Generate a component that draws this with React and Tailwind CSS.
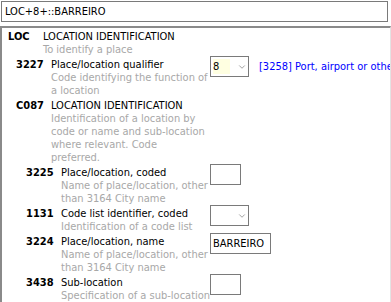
import { ChevronDown } from "lucide-react";

const entries = [
  { code: "LOC", level: 0, title: "LOCATION IDENTIFICATION", desc: ["To identify a place"] },
  {
    code: "3227",
    level: 1,
    title: "Place/location qualifier",
    desc: ["Code identifying the function of", "a location"],
    control: "select",
    value: "8",
    note: "[3258] Port, airport or other",
  },
  {
    code: "C087",
    level: 1,
    title: "LOCATION IDENTIFICATION",
    desc: [
      "Identification of a location by",
      "code or name and sub-location",
      "where relevant. Code",
      "preferred.",
    ],
  },
  {
    code: "3225",
    level: 2,
    title: "Place/location, coded",
    desc: ["Name of place/location, other", "than 3164 City name"],
    control: "input",
    width: "w-[31px]",
  },
  {
    code: "1131",
    level: 2,
    title: "Code list identifier, coded",
    desc: ["Identification of a code list"],
    control: "select",
  },
  {
    code: "3224",
    level: 2,
    title: "Place/location, name",
    desc: ["Name of place/location, other", "than 3164 City name"],
    control: "input",
    value: "BARREIRO",
    width: "w-[61px]",
  },
  {
    code: "3438",
    level: 2,
    title: "Sub-location",
    desc: ["Specification of a sub-location"],
    control: "input",
    width: "w-[31px]",
  },
];

// indent per nesting level, and what is left for the text before the control column
const indent = ["pl-[6px]", "pl-[14px]", "pl-[24px]"];
const textWidth = ["w-[167px]", "w-[159px]", "w-[149px]"];

function Control({ entry }) {
  if (entry.control === "select") {
    return (
      <div className="flex items-center">
        <div className="w-[39px] h-[21px] border border-[#7a7a7a] bg-white flex items-center pl-[2px]">
          <div
            className={`w-[17px] h-[15px] leading-[15px] text-black ${
              entry.value ? "bg-[#ffffe1]" : ""
            }`}
          >
            {entry.value || ""}
          </div>
          <ChevronDown size={10} strokeWidth={1.5} className="ml-[7px] text-[#6b6b6b]" />
        </div>
        {entry.note && (
          <span className="ml-[10px] whitespace-nowrap text-[#0000ff]">{entry.note}</span>
        )}
      </div>
    );
  }
  if (entry.control === "input") {
    return (
      <div
        className={`${entry.width} h-[21px] border border-[#7a7a7a] bg-white pl-[2px] leading-[19px] text-black`}
      >
        {entry.value || ""}
      </div>
    );
  }
  return null;
}

export default function App() {
  return (
    <div className="w-[391px] h-[302px] bg-white overflow-hidden font-['DejaVu_Sans_Condensed','DejaVu_Sans',sans-serif] text-[11px] text-black">
      <div className="pt-[1px] pl-[1px]">
        <div className="w-[387px] h-[21px] border border-[#7a7a7a] pl-[3px] leading-[19px]">
          LOC+8+::BARREIRO
        </div>
      </div>

      <div className="mt-[4px] w-[391px] h-[280px] border-t-2 border-l-2 border-r border-t-[#8a8a8a] border-l-[#8a8a8a] border-r-[#e3e3e3] overflow-hidden">
        {entries.map((entry) => (
          <div key={entry.code} className="flex pt-[2px] leading-[13px]">
            <div className={`flex shrink-0 ${indent[entry.level]}`}>
              <div className="w-[35px] font-bold">{entry.code}</div>
              <div className={textWidth[entry.level]}>
                <div className="whitespace-nowrap">{entry.title}</div>
                {entry.desc.map((line) => (
                  <div key={line} className="whitespace-nowrap text-[#a8a8a8]">
                    {line}
                  </div>
                ))}
              </div>
            </div>
            <div className="-mt-[2px]">
              <Control entry={entry} />
            </div>
          </div>
        ))}
      </div>
    </div>
  );
}
